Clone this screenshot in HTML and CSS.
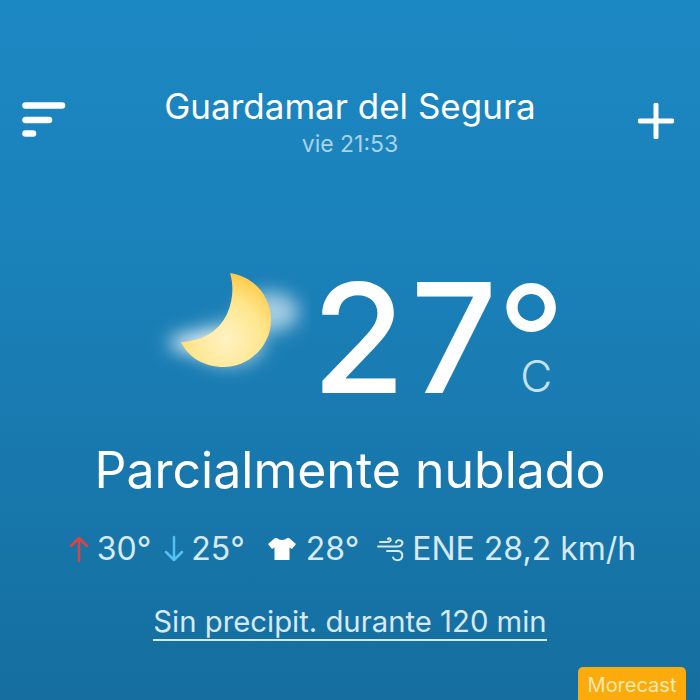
FILE: index.html
```html
<!DOCTYPE html>
<html lang="es">
<head>
  <meta charset="UTF-8">
  <title>Guardamar del Segura | Tiempo</title>
  <link rel="stylesheet" href="styles.css">
</head>
<body>
  <div class="screen">
    <!-- Top bar -->
    <header class="top-bar">
      <svg class="menu-icon" width="44" height="36" viewBox="0 0 44 36">
        <line x1="3.5" y1="3.5" x2="40" y2="3.5" />
        <line x1="3.5" y1="18" x2="27" y2="18" />
        <line x1="3.5" y1="31.5" x2="11" y2="31.5" />
      </svg>
      <div class="place">
        <div class="place-name">Guardamar del Segura</div>
        <div class="place-time">vie 21:53</div>
      </div>
      <svg class="add-icon" width="36" height="36" viewBox="0 0 36 36">
        <line x1="18" y1="2" x2="18" y2="34" />
        <line x1="2" y1="18" x2="34" y2="18" />
      </svg>
    </header>

    <!-- Current temperature -->
    <section class="current">
      <svg class="moon" width="170" height="130" viewBox="0 0 170 130">
        <defs>
          <radialGradient id="moonFill" cx="0.5" cy="0.7" r="0.72">
            <stop offset="0" stop-color="#fff2c4" />
            <stop offset="0.55" stop-color="#ffe78f" />
            <stop offset="1" stop-color="#fdc845" />
          </radialGradient>
          <filter id="glow" x="-50%" y="-50%" width="200%" height="200%">
            <feGaussianBlur stdDeviation="9" />
          </filter>
        </defs>
        <g filter="url(#glow)" fill="#ffffff">
          <ellipse cx="128" cy="52" rx="30" ry="20" opacity="0.6" />
          <ellipse cx="58" cy="83" rx="30" ry="11" opacity="0.8" />
          <ellipse cx="88" cy="84" rx="36" ry="22" opacity="0.55" />
        </g>
        <path d="M89 13 C115 17 130 38 130 60 C130 86 108 107 83 107 C63 107 47 97 40 82 C62 81 78 71 86 54 C92 41 93 26 89 13 Z" fill="url(#moonFill)" />
      </svg>
      <div class="temp">27</div>
      <div class="temp-unit">
        <span class="degree">°</span>
        <span class="scale">C</span>
      </div>
    </section>

    <div class="condition">Parcialmente nublado</div>

    <!-- Details row -->
    <div class="details">
      <svg class="arrow" width="20" height="28" viewBox="0 0 20 28">
        <path d="M10 26 V3 M2 11 L10 3 L18 11" stroke="#e0433f" />
      </svg>
      <span class="detail-value">30°</span>
      <svg class="arrow arrow-down" width="20" height="28" viewBox="0 0 20 28">
        <path d="M10 2 V25 M2 17 L10 25 L18 17" stroke="#52c2f2" />
      </svg>
      <span class="detail-value">25°</span>
      <svg class="shirt" width="30" height="24" viewBox="0 0 30 24">
        <path d="M10 1 C11.5 3.5 18.5 3.5 20 1 L22 1 L29 7 L25 12 L22.5 10.5 L22.5 23 L7.5 23 L7.5 10.5 L5 12 L1 7 L8 1 Z" fill="#ffffff" />
      </svg>
      <span class="detail-value">28°</span>
      <svg class="wind" width="28" height="26" viewBox="0 0 28 26">
        <path d="M3 6 H10 C13 6 14.5 4.5 13.5 3 C12.8 2 11.5 2 11 3 M1 10.5 H21 C25 10.5 26.5 7 24.5 5 C22.5 3.5 19.5 4 19 6.5 M10 15 H21 C25.5 15 26.5 20 24 23 C21.5 25 17 24.5 16 21.5" />
      </svg>
      <span class="detail-value">ENE 28,2 km/h</span>
    </div>

    <div class="precip">Sin precipit. durante 120 min</div>

    <div class="brand">Morecast</div>
  </div>
</body>
</html>
```

FILE: styles.css
```css
/* Base */
body {
  margin: 0;
  font-family: 'Inter', 'Noto Sans', sans-serif;
  color: white;
}

.screen {
  width: 700px;
  height: 700px;
  overflow: hidden;
  display: flex;
  flex-direction: column;
  align-items: center;
  background-image: linear-gradient(180deg, #1c88c3 0%, #1a80b8 40%, #156e9f 100%);
}

/* Top bar */
.top-bar {
  align-self: stretch;
  display: flex;
  justify-content: space-between;
  align-items: flex-start;
  padding: 85px 26px 0 22px;
}

.menu-icon {
  margin-top: 17px;
}

.menu-icon line,
.add-icon line {
  stroke: white;
  stroke-linecap: round;
}

.menu-icon line {
  stroke-width: 6.5;
}

.add-icon {
  margin-top: 18px;
}

.add-icon line {
  stroke-width: 5;
}

.place {
  text-align: center;
  margin-left: -4px;
}

.place-name {
  font-size: 35px;
  line-height: 42px;
  font-weight: 400;
}

.place-time {
  font-size: 23px;
  line-height: 28px;
  margin-top: 3px;
  color: #a9d3ea;
}

/* Current temperature */
.current {
  display: flex;
  align-items: flex-start;
  margin: 113px 0 0 5px;
  height: 134px;
}

.moon {
  margin: -11px 1px 0 0;
}

.temp {
  font-size: 152px;
  line-height: 134px;
  font-weight: 500;
  letter-spacing: 5px;
  margin-right: -4px;
}

.temp-unit {
  display: flex;
  flex-direction: column;
  align-items: center;
  width: 66px;
  margin-top: 23px;
}

.degree {
  font-size: 150px;
  line-height: 90px;
  height: 57px;
  font-weight: 400;
}

.scale {
  font-size: 44px;
  line-height: 50px;
  font-weight: 300;
  color: #c6e2f2;
  margin-left: 10px;
}

/* Condition text */
.condition {
  margin-top: 37px;
  font-size: 50px;
  line-height: 56px;
  font-weight: 400;
}

/* Details row */
.details {
  display: flex;
  align-items: center;
  margin: 31px 0 0 5px;
  font-size: 32px;
  line-height: 40px;
  color: #d6e9f5;
}

.arrow path,
.wind path {
  fill: none;
  stroke-width: 2.5;
  stroke-linecap: round;
  stroke-linejoin: round;
}

.wind path {
  stroke: #d6e9f5;
  stroke-width: 2;
}

.arrow {
  margin-right: 8px;
}

.arrow-down {
  margin: 0 7px 0 13px;
}

.shirt {
  margin: 0 9px 0 22px;
}

.wind {
  margin: 0 7px 0 18px;
}

/* Rain notice */
.precip {
  margin-top: 36px;
  font-size: 29.3px;
  line-height: 34px;
  color: #d6e9f5;
  border-bottom: 2px solid #d6e9f5;
}

/* Provider badge */
.brand {
  align-self: flex-end;
  margin: auto 14px 0 0;
  width: 108px;
  height: 33px;
  box-sizing: border-box;
  padding-top: 5px;
  text-align: center;
  font-size: 20px;
  line-height: 26px;
  color: #ffe9b0;
  background-color: #fbab0c;
  border-radius: 5px 5px 0 0;
}
```
